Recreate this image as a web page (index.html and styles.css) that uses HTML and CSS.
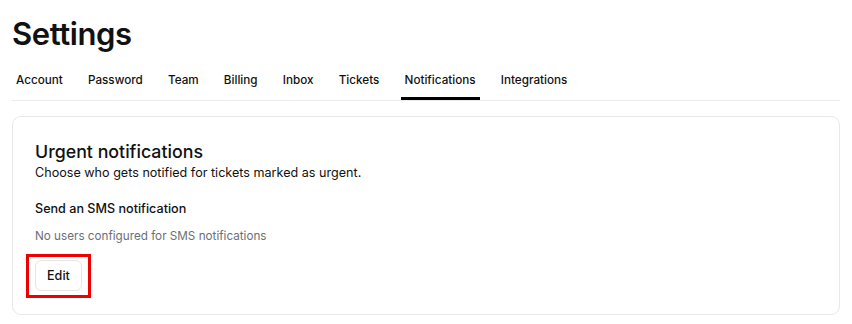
FILE: index.html
```html
<!DOCTYPE html>
<html lang="en">
<head>
  <meta charset="UTF-8">
  <title>Settings</title>
  <link rel="stylesheet" href="styles.css">
</head>
<body>
  <div class="page">
    <h1>Settings</h1>
    <nav class="tabs">
      <a class="tab" href="#">Account</a>
      <a class="tab" href="#">Password</a>
      <a class="tab" href="#">Team</a>
      <a class="tab" href="#">Billing</a>
      <a class="tab" href="#">Inbox</a>
      <a class="tab" href="#">Tickets</a>
      <a class="tab active" href="#">Notifications</a>
      <a class="tab" href="#">Integrations</a>
    </nav>
    <section class="card">
      <h2>Urgent notifications</h2>
      <p class="desc">Choose who gets notified for tickets marked as urgent.</p>
      <h3>Send an SMS notification</h3>
      <p class="empty">No users configured for SMS notifications</p>
      <button class="edit-btn" type="button">Edit</button>
    </section>
  </div>
</body>
</html>
```

FILE: styles.css
```css
body {
  margin: 0;
  font-family: Inter, 'Noto Sans', Arial, sans-serif;
  color: #111;
  background: #fff;
}
.page {
  padding: 14px 12px 0 12px;
}
h1 {
  margin: 0;
  font-size: 31px;
  font-weight: 600;
  line-height: 40px;
  letter-spacing: -0.4px;
}
.tabs {
  display: flex;
  gap: 17.2px;
  margin-top: 13px;
  border-bottom: 1px solid #ebebeb;
}
.tab {
  padding: 5px 4px 9px 4px;
  font-size: 11.7px;
  font-weight: 500;
  color: #111;
  text-decoration: none;
  line-height: 16px;
  border-bottom: 3px solid transparent;
}
.tab.active {
  border-bottom-color: #000;
}
.card {
  margin-top: 15px;
  border: 1px solid #e8e8e8;
  border-radius: 9px;
  padding: 24px 22px 23px 22px;
}
h2 {
  margin: 0;
  font-size: 17.8px;
  font-weight: 500;
  line-height: 22px;
}
.desc {
  margin: 1px 0 0 0;
  font-size: 12.6px;
  line-height: 18px;
}
h3 {
  margin: 18px 0 0 0;
  font-size: 12.6px;
  font-weight: 500;
  line-height: 18px;
}
.empty {
  margin: 10px 0 0 0;
  font-size: 11.7px;
  line-height: 16px;
  color: #6b6f76;
}
.edit-btn {
  position: relative;
  margin-top: 16px;
  height: 31px;
  padding: 0 11px;
  font-family: inherit;
  font-size: 12.6px;
  font-weight: 500;
  color: #111;
  background: #fff;
  border: 1px solid #e6e6e6;
  border-radius: 6px;
}
/* annotation box round the button */
.edit-btn::after {
  content: "";
  position: absolute;
  top: -7px;
  bottom: -8px;
  left: -10px;
  right: -10px;
  border: 3px solid #ee0000;
}
```
